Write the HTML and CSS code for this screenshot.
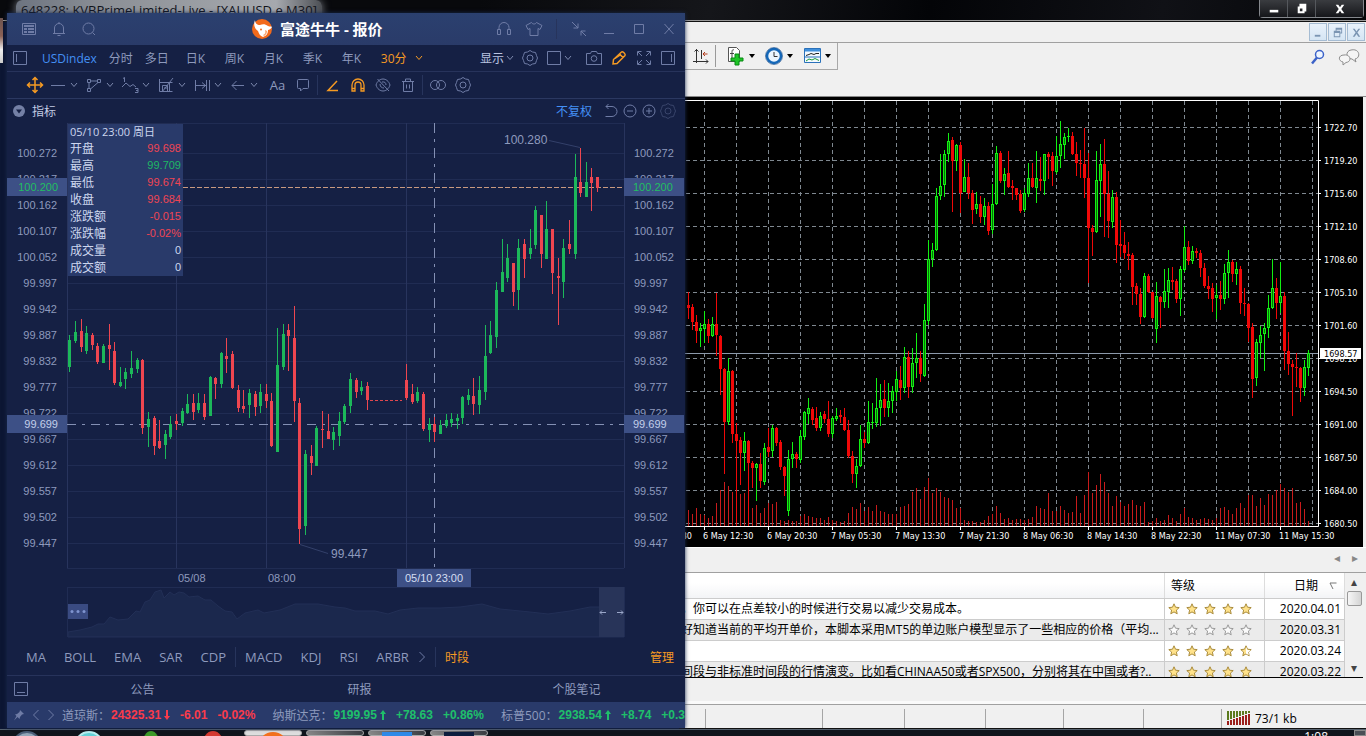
FILE: index.html
```html
<!DOCTYPE html>
<html lang="zh-CN">
<head>
    <meta charset="UTF-8">
    <meta name="viewport" content="width=device-width, initial-scale=1.0">
    <title>富途牛牛 - 报价</title>
    <link rel="stylesheet" href="styles.css">
</head>
<body>
    <!-- Shared icons -->
    <svg class="sprite" aria-hidden="true">
        <symbol id="i-chev" viewBox="0 0 8 6"><path d="M1 1l3 3.5L7 1"/></symbol>
        <symbol id="i-news" viewBox="0 0 18 18"><path d="M2.500 3.500h13v11h-13z"/><path d="M4 6h10M4 9h3M8 9h6M4 12h3M8 12h6" stroke-width="2"/></symbol>
        <symbol id="i-bell" viewBox="0 0 18 18"><path d="M3 13.500h12M4.500 13.500V8a4.500 4.500 0 0 1 9 0v5.500M7.500 15.500h3M9 3.500V2"/></symbol>
        <symbol id="i-search" viewBox="0 0 18 18"><circle cx="8.500" cy="8.500" r="5.500"/><path d="M12.500 12.500l2.500 2.500"/></symbol>
        <symbol id="i-head" viewBox="0 0 18 18"><path d="M4 9V7.500a5 5 0 0 1 10 0V9M2.500 9.500h3v5h-3zM12.500 9.500h3v5h-3z"/></symbol>
        <symbol id="i-shirt" viewBox="0 0 18 18"><path d="M6.500 2.500L1 5.500l2 4 2-1v7h8v-7l2 1 2-4-5.500-3c-1 2-4 2-5 0z"/></symbol>
        <symbol id="i-shrink" viewBox="0 0 18 18"><path d="M2 2l6 6M8 3.500V8H3.500M16 16l-5-5M11 15.500V11h4.500"/></symbol>
        <symbol id="i-min" viewBox="0 0 18 18"><path d="M4 13.500h10"/></symbol>
        <symbol id="i-max" viewBox="0 0 18 18"><path d="M4.500 4.500h9v9h-9z"/></symbol>
        <symbol id="i-close" viewBox="0 0 18 18"><path d="M4.500 4l9 10M13.500 4l-9 10"/></symbol>
        <symbol id="i-panel-l" viewBox="0 0 16 16"><path d="M1.500 1.500h13v13h-13zM4.500 4v8"/></symbol>
        <symbol id="i-panel-r" viewBox="0 0 16 16"><path d="M1.500 1.500h13v13h-13zM11.500 4v8"/></symbol>
        <symbol id="i-panel-b" viewBox="0 0 16 16"><path d="M1.500 1.500h13v13h-13zM4 11.500h8"/></symbol>
        <symbol id="i-square" viewBox="0 0 16 16"><path d="M1.500 1.500h13v13h-13z"/></symbol>
        <symbol id="i-hex" viewBox="0 0 18 18"><path d="M9 1.500l2.500 1.500 3 .5 1 3L16.500 9l-1 2.500-1 3-3 .5L9 16.500 6.500 15l-3-.5-1-3L1.500 9l1-2.500 1-3 3-.5z"/><circle cx="9" cy="9" r="3"/></symbol>
        <symbol id="i-camera" viewBox="0 0 18 18"><path d="M1.500 4.500h4l1-2h5l1 2h4v11h-15z"/><circle cx="9" cy="9.500" r="2.800"/></symbol>
        <symbol id="i-pencil" viewBox="0 0 18 18"><path d="M3 15l.5-4.500L11.500 3c1-1 4.500 2 3.500 3.500L7 14.500zM9.500 5l3.500 3.500M5 9.500L11 5.500" stroke-width="1.500"/></symbol>
        <symbol id="i-expand" viewBox="0 0 18 18"><path d="M2.500 6.500v-4h4M3 3l4 4M11.500 2.500h4v4M15 3l-4 4M2.500 11.500v4h4M3 15l4-4M11.500 15.500h4v-4M15 15l-4-4"/></symbol>
        <symbol id="i-move" viewBox="0 0 18 18"><path d="M9 2v14M2 9h14M6.500 4L9 1.500 11.500 4M6.500 14L9 16.500l2.500-2.500M4 6.500L1.500 9 4 11.500M14 6.500L16.500 9 14 11.500" stroke-width="1.500"/></symbol>
        <symbol id="i-line" viewBox="0 0 18 18"><path d="M2 9.500h14"/></symbol>
        <symbol id="i-poly" viewBox="0 0 18 18"><path d="M2.500 3.500h3v3h-3zM12.500 3.500h3v3h-3zM2.500 12.500h3v3h-3zM5.500 5h7M4 6.500v6M5.500 13L13 6.500"/></symbol>
        <symbol id="i-wave" viewBox="0 0 18 18"><path d="M2 2.500l1.500-1V6M1 11l4-4 4 3.500 3-2 3 2.500M14 12.500h3v4h-3M15 14.500h2"/></symbol>
        <symbol id="i-grid" viewBox="0 0 18 18"><path d="M2.500 3v12.500h13M2.500 6.500h13M5.500 15.500v-6h5v6M12.500 6v9M5 16L16 2M7 12h3"/></symbol>
        <symbol id="i-range" viewBox="0 0 18 18"><path d="M2.500 4v11M13.500 4v11M16.500 4v11M3 9.500h10M9 6.500l3.500 3L9 12.500"/></symbol>
        <symbol id="i-left" viewBox="0 0 18 18"><path d="M3 9.500h12M7.500 5L3 9.500 7.500 14"/></symbol>
        <symbol id="i-note" viewBox="0 0 18 18"><path d="M3.500 4.500q0-1 1-1h9q1 0 1 1v7q0 1-1 1H9l-2.500 2.500v-2.500h-2q-1 0-1-1z"/></symbol>
        <symbol id="i-angle" viewBox="0 0 18 18"><path d="M14 14.500H4L13 5" stroke-width="1.500"/></symbol>
        <symbol id="i-magnet" viewBox="0 0 18 18"><path d="M3 15V9a6 6 0 0 1 12 0v6h-3V9a3 3 0 0 0-6 0v6zM3 12.500h3M12 12.500h3" stroke-width="1.300"/></symbol>
        <symbol id="i-eye" viewBox="0 0 18 18"><path d="M2 9c2.500-8 11.500-8 14 0-2.500 8-11.500 8-14 0zM3.500 3l11.500 12M6 8c0 3 2 4 4 4M8 6c3-.5 4 1 4 3"/></symbol>
        <symbol id="i-trash" viewBox="0 0 18 18"><path d="M3 5.500h12M6.500 5V3h5v2M4.500 5.500v10h9v-10M7.500 8.500v4M10.500 8.500v4"/></symbol>
        <symbol id="i-venn" viewBox="0 0 18 18"><circle cx="6" cy="9" r="4.500"/><circle cx="12" cy="9" r="4.500"/></symbol>
        <symbol id="i-undo" viewBox="0 0 18 18"><path d="M3.500 14.500H10a4.500 4.500 0 0 0 0-10H4M6.500 2L4 4.500 6.500 7"/></symbol>
        <symbol id="i-minus" viewBox="0 0 18 18"><circle cx="9" cy="9" r="6"/><path d="M6 9h6"/></symbol>
        <symbol id="i-plus" viewBox="0 0 18 18"><circle cx="9" cy="9" r="6"/><path d="M6 9h6M9 6v6"/></symbol>
        <symbol id="i-next" viewBox="0 0 8 14"><path d="M1.500 2l5 5-5 5"/></symbol>
        <symbol id="i-prev" viewBox="0 0 8 14"><path d="M6.500 2l-5 5 5 5"/></symbol>
        <symbol id="i-star" viewBox="0 0 12 12"><path d="M6 .8l1.500 3.400 3.700.4-2.800 2.500.8 3.700L6 8.900l-3.200 1.900.8-3.700L.8 4.600l3.700-.4z"/></symbol>
    </svg>

    <!-- MetaTrader window -->
    <header class="mt-title">
        <span class="mt-title-text">648228: KVBPrimeLimited-Live - [XAUUSD.e,M30]</span>
        <div class="aero-buttons">
            <button type="button" aria-label="最小化"><svg viewBox="0 0 14 14"><path d="M2 8h10v3H2z"/></svg></button>
            <button type="button" aria-label="还原"><svg viewBox="0 0 14 14"><path d="M4 1h8v9h-2v2H2V4h2zM4.500 6.500v3h3v-3z" fill-rule="evenodd"/></svg></button>
            <button type="button" class="aero-close" aria-label="关闭"><svg viewBox="0 0 14 14"><path d="M2 2h3l2 3 2-3h3L8.500 7 12 12H9L7 9l-2 3H2l3.500-5z"/></svg></button>
        </div>
    </header>

    <main class="mt-body">
        <div class="mt-menu">
            <button type="button" aria-label="最小化图表"><svg viewBox="0 0 14 14"><path d="M3 9.500h6v2H3z"/></svg></button>
            <button type="button" aria-label="还原图表"><svg viewBox="0 0 14 14"><path d="M5 2h7v6h-2v4H3V5h2zM6 4v1h4v2h1V4zM4 7.500V11h5V7.500z" fill-rule="evenodd"/></svg></button>
            <button type="button" aria-label="关闭图表"><svg viewBox="0 0 14 14"><path d="M3 3h2l2 3 2-3h2L8 7l3 4.500H9L7 8.500l-2 3H3L6 7z"/></svg></button>
        </div>
        <div class="mt-toolbar">
            <div class="mt-tools">
                <button type="button" aria-label="图表平移"><svg width="18" height="18" viewBox="0 0 18 18" fill="none" stroke="#333"><path d="M4.500 2v14M1 14.500h15M9.500 3v9M2.500 4.500l2-2 2 2M14 12.500l2 2-2 2"/><path d="M15.500 7H11M13 5l-2 2 2 2" stroke="#b43a1a"/></svg></button>
                <span class="mt-sep"></span>
                <button type="button" class="mt-drop" aria-label="指标"><svg width="22" height="20" viewBox="0 0 22 20"><path d="M3.500 1.500h8l3 3v11h-11z" fill="#fff" stroke="#555"/><path d="M9 4c-2-1-2 1-2 3v5M5 7.500h4" fill="none" stroke="#444"/><path d="M10 8h4v4h4v3h-4v4h-4v-4H6v-3h4z" fill="#1fc427" stroke="#078a12"/></svg><i></i></button>
                <button type="button" class="mt-drop" aria-label="周期"><svg width="22" height="20" viewBox="0 0 22 20"><circle cx="11" cy="10" r="7" fill="#eaf5ff" stroke="#1467b8" stroke-width="2.500"/><circle cx="11" cy="10" r="8.500" fill="none" stroke="#0b4384" stroke-width=".6"/><path d="M11 6v4.500h3.500" fill="none" stroke="#333"/></svg><i></i></button>
                <button type="button" class="mt-drop" aria-label="模板"><svg width="22" height="20" viewBox="0 0 22 20"><path d="M3.500 2.500h16v14h-16z" fill="#f4faff" stroke="#2a71ba"/><path d="M4 3h15v2.500H4z" fill="#3f8fdb"/><path d="M4 11h15" stroke="#2a71ba"/><path d="M5 9.500l3-1 2-1 3 1 2-1h3" fill="none" stroke="#222"/><path d="M5 15l3-2 3 1 3-1.500 4 2" fill="none" stroke="#1c9b36"/></svg><i></i></button>
            </div>
            <div class="mt-right-tools">
                <button type="button" aria-label="搜索"><svg width="16" height="16" viewBox="0 0 16 16" fill="#eef5ff" stroke="#3c62c8"><circle cx="9.500" cy="5.500" r="4" stroke-width="1.500"/><path d="M7 8.500l-5 6" stroke-width="2.500"/></svg></button>
                <button type="button" aria-label="聊天"><svg width="22" height="18" viewBox="0 0 22 18" fill="#f5f5f5" stroke="#8d8d8d"><path d="M13 2c9-2 10 8 4 9l1 3-4-3C8 11 7 3 13 2z"/><path d="M6 7c7-1 8 7 2 7.500L5 17v-3C0 13 0 7 6 7z"/></svg></button>
            </div>
        </div>

        <svg class="mt-chart" id="mtChart" viewBox="679 97 687 450" role="img" aria-label="XAUUSD M30"></svg>

        <div class="mt-scroll"><span>◂</span><span>▸</span></div>

        <div class="mt-list">
            <table>
                <thead>
                    <tr><th></th><th class="col-rate">等级</th><th class="col-date">日期 <svg width="8" height="8" viewBox="0 0 8 8"><path d="M1 1h6.500M1 1l3 6" fill="none" stroke="#777"/></svg></th></tr>
                </thead>
                <tbody>
                    <tr><td>，你可以在点差较小的时候进行交易以减少交易成本。</td><td class="stars" data-stars="5"></td><td class="date">2020.04.01</td></tr>
                    <tr><td>好知道当前的平均开单价，本脚本采用MT5的单边账户模型显示了一些相应的价格（平均...</td><td class="stars" data-stars="0"></td><td class="date">2020.03.31</td></tr>
                    <tr><td></td><td class="stars" data-stars="4.5"></td><td class="date">2020.03.24</td></tr>
                    <tr><td>间段与非标准时间段的行情演变。比如看CHINAA50或者SPX500，分别将其在中国或者?..</td><td class="stars" data-stars="5"></td><td class="date">2020.03.22</td></tr>
                </tbody>
            </table>
            <div class="mt-scrollbar"><span>▴</span><b></b><span class="down">▾</span></div>
        </div>
        <div class="mt-gap"></div>
        <footer class="mt-status">
            <span></span><span></span><span></span><span></span><span></span><span></span><span></span>
            <div class="traffic"><svg id="traffic" width="24" height="14" viewBox="0 0 24 14"></svg>73/1 kb</div>
        </footer>
    </main>

    <footer class="taskbar">
        <span class="task"><i class="orb"></i></span>
        <span class="task"><i class="cyan"></i></span>
        <span class="task"><i class="green"></i></span>
        <span class="task"><i class="red"></i></span>
        <span class="task open active"><i class="orange"></i></span>
        <span class="task open"></span>
        <span class="task open"><i class="blue"></i></span>
        <span class="task open"><i class="navy"></i></span>
        <span class="clock">1:08</span>
        <span class="peek"></span>
    </footer>

    <div class="avatar"></div>

    <!-- Futu quote window -->
    <section class="futu">
        <header class="futu-title">
            <button type="button" aria-label="资讯"><svg class="icon"><use href="#i-news"/></svg></button>
            <button type="button" aria-label="提醒"><svg class="icon"><use href="#i-bell"/></svg></button>
            <button type="button" aria-label="搜索"><svg class="icon"><use href="#i-search"/></svg></button>
            <h1>
                <svg width="20" height="20" viewBox="0 0 20 20"><circle cx="10" cy="10" r="10" fill="#f26a1b"/><path d="M3 1c0 3 2 5 5 5 3-1 5-1 8 1 2 1 3 0 4 1-1 2-3 3-4 3 0 4-2 6-5 7-3-1-4-3-5-6C3 10 1 6 3 1z" fill="#fff"/><circle cx="9" cy="10.500" r="1" fill="#f26a1b"/><path d="M12 17c2-1 3-3 3-5l-2-1c1 3 0 4-2 5z" fill="#f9a36c"/></svg>
                富途牛牛 - 报价
            </h1>
            <div class="futu-controls">
                <button type="button" aria-label="客服"><svg class="icon"><use href="#i-head"/></svg></button>
                <button type="button" aria-label="皮肤"><svg class="icon"><use href="#i-shirt"/></svg></button>
                <span class="sep title-sep"></span>
                <button type="button" aria-label="精简"><svg class="icon"><use href="#i-shrink"/></svg></button>
                <button type="button" aria-label="最小化"><svg class="icon"><use href="#i-min"/></svg></button>
                <button type="button" aria-label="最大化"><svg class="icon"><use href="#i-max"/></svg></button>
                <button type="button" aria-label="关闭"><svg class="icon"><use href="#i-close"/></svg></button>
            </div>
        </header>

        <nav class="periods">
            <button type="button" aria-label="左侧栏"><svg class="icon small"><use href="#i-panel-l"/></svg></button>
            <div class="period-main">
                <button type="button" class="symbol">USDindex</button>
                <button type="button">分时</button>
                <button type="button">多日</button>
            </div>
            <div class="period-k">
                <button type="button">日K</button>
                <button type="button">周K</button>
                <button type="button">月K</button>
                <button type="button">季K</button>
                <button type="button">年K</button>
                <button type="button" class="on">30分<svg class="chev"><use href="#i-chev"/></svg></button>
            </div>
            <div class="view-tools">
                <button type="button" class="show">显示<svg class="chev"><use href="#i-chev"/></svg></button>
                <button type="button" aria-label="设置"><svg class="icon"><use href="#i-hex"/></svg></button>
                <button type="button" class="box" aria-label="窗格"><svg class="icon small"><use href="#i-square"/></svg><svg class="chev"><use href="#i-chev"/></svg></button>
                <button type="button" aria-label="截图"><svg class="icon"><use href="#i-camera"/></svg></button>
                <button type="button" class="on" aria-label="画线"><svg class="icon"><use href="#i-pencil"/></svg></button>
                <button type="button" aria-label="全屏"><svg class="icon"><use href="#i-expand"/></svg></button>
                <button type="button" aria-label="右侧栏"><svg class="icon small"><use href="#i-panel-r"/></svg></button>
            </div>
        </nav>

        <div class="draw-tools">
            <button type="button" class="on" aria-label="移动"><svg class="icon"><use href="#i-move"/></svg></button>
            <div class="drops">
                <button type="button" aria-label="直线"><svg class="icon"><use href="#i-line"/></svg><svg class="chev"><use href="#i-chev"/></svg></button>
                <button type="button" aria-label="形状"><svg class="icon"><use href="#i-poly"/></svg><svg class="chev"><use href="#i-chev"/></svg></button>
                <button type="button" aria-label="波浪"><svg class="icon"><use href="#i-wave"/></svg><svg class="chev"><use href="#i-chev"/></svg></button>
                <button type="button" aria-label="江恩"><svg class="icon"><use href="#i-grid"/></svg><svg class="chev"><use href="#i-chev"/></svg></button>
                <button type="button" aria-label="区间"><svg class="icon"><use href="#i-range"/></svg><svg class="chev"><use href="#i-chev"/></svg></button>
                <button type="button" aria-label="箭头"><svg class="icon"><use href="#i-left"/></svg><svg class="chev"><use href="#i-chev"/></svg></button>
            </div>
            <button type="button" class="text-tool">Aa</button>
            <button type="button" aria-label="注释"><svg class="icon"><use href="#i-note"/></svg></button>
            <span class="sep"></span>
            <button type="button" class="on" aria-label="角度"><svg class="icon"><use href="#i-angle"/></svg></button>
            <button type="button" class="on" aria-label="磁铁"><svg class="icon"><use href="#i-magnet"/></svg></button>
            <button type="button" aria-label="隐藏"><svg class="icon"><use href="#i-eye"/></svg></button>
            <button type="button" aria-label="删除"><svg class="icon"><use href="#i-trash"/></svg></button>
            <span class="sep"></span>
            <button type="button" aria-label="叠加"><svg class="icon"><use href="#i-venn"/></svg></button>
            <button type="button" aria-label="设置"><svg class="icon"><use href="#i-hex"/></svg></button>
        </div>

        <div class="chart-head">
            <button type="button" class="fold"><svg width="12" height="12" viewBox="0 0 12 12"><circle cx="6" cy="6" r="6" fill="#7480a6"/><path d="M3 4.500h6L6 8.500z" fill="#152044"/></svg>指标</button>
            <div class="chart-zoom">
                <a href="#">不复权</a>
                <button type="button" aria-label="撤销"><svg class="icon"><use href="#i-undo"/></svg></button>
                <button type="button" aria-label="缩小"><svg class="icon"><use href="#i-minus"/></svg></button>
                <button type="button" aria-label="放大"><svg class="icon"><use href="#i-plus"/></svg></button>
                <button type="button" class="dim" aria-label="设置"><svg class="icon"><use href="#i-hex"/></svg></button>
            </div>
        </div>

        <div class="chart-wrap">
            <svg class="futu-chart" id="futuChart" viewBox="7 122 678 516" role="img" aria-label="USDindex 30分"></svg>
            <table class="tip">
                <caption>05/10 23:00 周日</caption>
                <tr><th>开盘</th><td class="down">99.698</td></tr>
                <tr><th>最高</th><td class="up">99.709</td></tr>
                <tr><th>最低</th><td class="down">99.674</td></tr>
                <tr><th>收盘</th><td class="down">99.684</td></tr>
                <tr><th>涨跌额</th><td class="down">-0.015</td></tr>
                <tr><th>涨跌幅</th><td class="down">-0.02%</td></tr>
                <tr><th>成交量</th><td>0</td></tr>
                <tr><th>成交额</th><td>0</td></tr>
            </table>
        </div>

        <div class="indicators">
            <button type="button">MA</button>
            <button type="button">BOLL</button>
            <button type="button">EMA</button>
            <button type="button">SAR</button>
            <button type="button">CDP</button>
            <span class="sep"></span>
            <button type="button">MACD</button>
            <button type="button">KDJ</button>
            <button type="button">RSI</button>
            <button type="button">ARBR</button>
            <button type="button" class="more" aria-label="更多"><svg class="arrow"><use href="#i-next"/></svg></button>
            <span class="sep"></span>
            <button type="button" class="on">时段</button>
            <button type="button" class="on manage">管理</button>
        </div>

        <div class="info-tabs">
            <button type="button" class="tab-fold" aria-label="折叠"><svg class="icon small"><use href="#i-panel-b"/></svg></button>
            <button type="button">公告</button>
            <button type="button">研报</button>
            <button type="button">个股笔记</button>
        </div>

        <div class="ticker">
            <svg class="pin" width="12" height="12" viewBox="0 0 12 12"><path d="M7 1l4 4-2 .5L7 8l-.5 2L4.500 8 1 11.500 3.500 7 2 5.500 4 5l2.500-2z" fill="#6f7ca6"/></svg>
            <svg class="arrow"><use href="#i-prev"/></svg>
            <svg class="arrow"><use href="#i-next"/></svg>
            <div class="quote down"><span>道琼斯：</span><b>24325.31<svg width="6" height="10" viewBox="0 0 6 10"><path d="M2 0h2v6h2L3 10 0 6h2z"/></svg></b><b>-6.01</b><b>-0.02%</b></div>
            <div class="quote up"><span>纳斯达克：</span><b>9199.95<svg width="6" height="10" viewBox="0 0 6 10"><path d="M2 10h2V4h2L3 0 0 4h2z"/></svg></b><b>+78.63</b><b>+0.86%</b></div>
            <div class="quote up"><span>标普500：</span><b>2938.54<svg width="6" height="10" viewBox="0 0 6 10"><path d="M2 10h2V4h2L3 0 0 4h2z"/></svg></b><b>+8.74</b><b>+0.30%</b></div>
        </div>
    </section>

    <script src="charts.js"></script>
</body>
</html>
```
FILE: styles.css
```css
* {
    box-sizing: border-box;
}
body {
    margin: 0;
    height: 100vh;
    display: flex;
    flex-direction: column;
    overflow: hidden;
    position: relative;
    background: #0c1633;
    font-family: "Open Sans", "Noto Sans CJK SC", sans-serif;
    font-size: 12px;
}
button {
    background: none;
    border: none;
    padding: 0;
    margin: 0;
    font: inherit;
    color: inherit;
    display: flex;
    align-items: center;
    justify-content: center;
    flex: none;
    white-space: nowrap;
}
svg {
    flex: none;
}
.sprite {
    position: absolute;
    width: 0;
    height: 0;
}

/* MetaTrader window */
.mt-title {
    height: 22px;
    flex: none;
    display: flex;
    justify-content: space-between;
    background: linear-gradient(100deg, #08090c 35%, #15161a 52%, #030407 68%, #101116 85%, #050608);
    border-bottom: 1px solid #111;
    box-shadow: inset 0 -1px #999;
    overflow: hidden;
}
.mt-title-text {
    margin-left: 16px;
    padding: 0 5px;
    font-size: 13px;
    line-height: 20px;
    height: 20px;
    color: #10131a;
    background: linear-gradient(90deg, #6d7480, #8c9096 30%, #a6a9ae 85%, #4c4f54);
    border-radius: 6px;
    box-shadow: 0 0 8px #777b82;
}
.aero-buttons {
    display: flex;
    height: 18px;
    margin-right: 2px;
    border: 1px solid #85888d;
    border-top: none;
    border-radius: 0 0 4px 4px;
}
.aero-buttons button {
    width: 28px;
    border-right: 1px solid #55585d;
    background: linear-gradient(#3a3c40, #15161a);
}
.aero-buttons .aero-close {
    width: 47px;
    border-right: none;
}
.aero-buttons svg {
    width: 12px;
    height: 12px;
    fill: #fff;
}
.mt-body {
    flex: 1;
    min-height: 0;
    margin-left: calc(50% - 4px);
    display: flex;
    flex-direction: column;
    background: #f0f0f0;
}
.mt-menu {
    height: 21px;
    flex: none;
    display: flex;
    justify-content: flex-end;
    gap: 1px;
    padding: 1px 1px 1px 0;
    border-bottom: 1px solid #a0a0a0;
}
.mt-menu button {
    width: 18px;
    background: linear-gradient(#e9f2fb, #d5e5f4);
    border: 1px solid #a5bcd3;
}
.mt-menu svg {
    width: 13px;
    height: 13px;
    fill: #7b95b3;
}
.mt-toolbar {
    height: 54px;
    flex: none;
    display: flex;
    justify-content: space-between;
    align-items: flex-start;
    border-bottom: 1px solid #888;
}
.mt-tools {
    height: 27px;
    display: flex;
    align-items: center;
    padding: 0 2px 0 12px;
    border: 1px solid #a8a8a8;
    border-top: none;
}
.mt-sep {
    width: 1px;
    height: 22px;
    margin: 0 5px;
    background: #999;
}
.mt-drop {
    width: 38px;
    gap: 2px;
}
.mt-drop i {
    border: 3px solid transparent;
    border-top: 4px solid #000;
    border-bottom: none;
}
.mt-right-tools {
    display: flex;
    align-items: center;
    gap: 12px;
    height: 28px;
    padding-right: 6px;
}
.mt-chart {
    display: block;
    width: 100%;
    background: #000;
    font-family: "DejaVu Sans Condensed", "DejaVu Sans", sans-serif;
    font-size: 9px;
}
.mt-scroll {
    height: 26px;
    flex: none;
    display: flex;
    justify-content: flex-end;
    gap: 12px;
    padding-right: 8px;
    color: #888;
    line-height: 20px;
    border-top: 1px solid #fff;
    border-bottom: 1px solid #a0a0a0;
}
.mt-list {
    flex: 1;
    min-height: 0;
    display: flex;
    margin-right: 3px;
    overflow: hidden;
    background: #fff;
    border-bottom: 1px solid #000;
}
.mt-list table {
    flex: 1;
    border-collapse: collapse;
    table-layout: fixed;
    color: #000;
}
.mt-list th {
    height: 25px;
    padding: 0 6px;
    font-weight: normal;
    text-align: left;
    background: linear-gradient(#fff 40%, #f3f4f6);
    border-right: 1px solid #ddd;
    border-bottom: 1px solid #ccc;
}
.mt-list td {
    height: 21px;
    padding: 0 2px;
    line-height: 18px;
    white-space: nowrap;
    overflow: hidden;
    border-right: 1px solid #ccc;
    border-bottom: 1px solid #ccc;
}
.mt-list tbody tr:nth-child(even) {
    background: #ebebeb;
}
.mt-list .col-rate {
    width: 100px;
}
.mt-list .col-date {
    width: 80px;
    padding: 0 7px;
    text-align: right;
}
.col-date svg {
    margin-left: 8px;
}
.mt-list .stars {
    padding-left: 3px;
    font-size: 0;
}
.stars svg {
    width: 12px;
    height: 12px;
    margin-right: 6px;
    stroke: #a98b3c;
    fill: #ffe28a;
    vertical-align: middle;
}
.stars .empty {
    stroke: #999;
    fill: #fafafa;
}
.mt-list .date {
    padding-right: 3px;
    text-align: right;
}
.mt-scrollbar {
    width: 18px;
    display: flex;
    flex-direction: column;
    align-items: center;
    background: #f0f0f0;
    color: #444;
    line-height: 18px;
}
.mt-scrollbar b {
    width: 15px;
    height: 15px;
    background: linear-gradient(90deg, #f6f6f6, #d4d4d4);
    border: 1px solid #999;
    border-radius: 2px;
}
.mt-scrollbar .down {
    margin-top: auto;
}
.mt-gap {
    height: 27px;
    flex: none;
    border-bottom: 1px solid #a0a0a0;
    box-shadow: inset 0 -3px #fafafa;
}
.mt-status {
    height: 24px;
    flex: none;
    display: grid;
    grid-template-columns: 27fr 117fr 82fr 81fr 78fr 80fr 78fr 144fr;
    padding-top: 4px;
    border-bottom: 1px solid #111;
}
.mt-status span {
    height: 19px;
    border-right: 1px solid #a5a5a5;
}
.traffic {
    display: flex;
    align-items: center;
    gap: 4px;
    height: 18px;
    padding-left: 5px;
}

/* Taskbar */
.taskbar {
    height: 7px;
    flex: none;
    display: flex;
    overflow: hidden;
    background: #10151c;
    border-top: 1px solid #56626f;
}
.task {
    width: 62px;
    display: flex;
    justify-content: center;
}
.task:first-child {
    margin-left: -4px;
}
.task i {
    width: 30px;
    height: 30px;
    margin-top: 1px;
    border-radius: 50%;
}
.task.open {
    width: 58px;
    margin-right: 4px;
    border: 1px solid #aaa;
    border-radius: 3px;
    background: linear-gradient(90deg, #888, #3a3d42);
}
.task.active {
    background: #dedede;
}
.task .orb {
    background: #93a6b8;
    border: 2px solid #4b5f78;
}
.task .cyan {
    background: #62d1d6;
    border: 2px solid #b9eff0;
}
.task .green {
    width: 18px;
    background: #3c9a28;
}
.task .red {
    width: 22px;
    background: #d53a31;
}
.task .orange {
    background: #f2701d;
}
.task .blue {
    border-radius: 0;
    background: #2f8ae8;
}
.task .navy {
    border-radius: 0;
    background: #0d1e3e;
}
.clock {
    margin-left: auto;
    margin-right: 26px;
    line-height: 14px;
    color: #fff;
}
.peek {
    width: 12px;
    background: #4a4e55;
    border: 1px solid #888;
}
.avatar {
    position: absolute;
    left: 0;
    top: 18px;
    width: 3px;
    height: 45px;
    background: linear-gradient(#6d5450, #8b6256 40%, #eee 70%, #ccc);
}

/* Futu window */
.futu {
    position: absolute;
    left: 7px;
    top: 13px;
    bottom: 8px;
    width: calc(50% - 5px);
    display: flex;
    flex-direction: column;
    overflow: hidden;
    background: #152044;
    color: #8e9abd;
    box-shadow: 0 0 4px #1a2a50;
}
.icon {
    width: 18px;
    height: 18px;
    fill: none;
    stroke: #6f7ca6;
}
.icon.small {
    width: 16px;
    height: 16px;
}
.chev {
    width: 8px;
    height: 6px;
    fill: none;
    stroke: #7d89ae;
}
.arrow {
    width: 8px;
    height: 14px;
    fill: none;
    stroke: #6f7ca6;
}
.on {
    color: #f59a23;
}
.on .icon,
.on .chev {
    stroke: #f59a23;
}
.sep {
    width: 1px;
    height: 20px;
    background: #27345c;
}
.futu-title {
    height: 32px;
    flex: none;
    display: flex;
    align-items: center;
    padding: 0 1px 0 7px;
    background: linear-gradient(#2b406f, #2a3b69);
}
.futu-title button {
    width: 30px;
    height: 30px;
}
.futu-title h1 {
    display: flex;
    align-items: center;
    gap: 8px;
    margin: 0 0 0 148px;
    font-size: 15px;
    line-height: 20px;
    color: #fff;
}
.futu-controls {
    display: flex;
    align-items: center;
    margin-left: auto;
}
.title-sep {
    margin: 0 7px;
}
.periods {
    height: 27px;
    flex: none;
    display: flex;
    align-items: center;
    padding: 0 9px 0 5px;
    border-bottom: 1px solid #27335b;
}
.period-main {
    display: flex;
    align-items: center;
    gap: 12px;
    margin-left: 14px;
}
.symbol {
    color: #4490f5;
}
.period-k {
    display: grid;
    grid-auto-flow: column;
    grid-auto-columns: 39px;
    margin-left: 17px;
}
.period-k button {
    justify-content: flex-start;
}
.period-k .chev {
    margin-left: 8px;
}
.view-tools {
    display: flex;
    align-items: center;
    gap: 7px;
    margin-left: auto;
}
.view-tools .show {
    gap: 2px;
    color: #b9c4e2;
}
.view-tools .box {
    gap: 2px;
    margin-right: 6px;
}
.draw-tools {
    height: 27px;
    flex: none;
    display: flex;
    align-items: center;
    padding-left: 15px;
    border-bottom: 1px solid #2b3861;
}
.draw-tools > button {
    width: 25px;
}
.draw-tools .text-tool {
    font-size: 13px;
}
.draw-tools .sep {
    margin: 0 2px;
}
.drops {
    display: grid;
    grid-auto-flow: column;
    grid-auto-columns: 36px;
    margin-left: 2px;
}
.drops button {
    gap: 3px;
    justify-content: flex-start;
}
.chart-head {
    height: 23px;
    flex: none;
    display: flex;
    align-items: center;
    justify-content: space-between;
    padding: 0 8px 0 6px;
}
.fold {
    gap: 7px;
    color: #c3cce4;
}
.chart-zoom {
    display: flex;
    align-items: center;
    gap: 1px;
}
.chart-zoom a {
    margin-right: 9px;
    color: #4490f5;
    text-decoration: none;
}
.dim {
    opacity: 0.4;
}
.chart-wrap {
    flex: none;
    position: relative;
}
.futu-chart {
    display: block;
    width: 100%;
    font-family: "Liberation Sans", Arial, sans-serif;
    font-size: 11px;
}
.tip {
    position: absolute;
    left: 61px;
    top: 2px;
    width: 115px;
    border-collapse: collapse;
    background: #293a6a;
    color: #cdd7ef;
    font-size: 12px;
    line-height: 17px;
}
.tip caption {
    padding-left: 2px;
    text-align: left;
    line-height: 16px;
    background: #293a6a;
    font-size: 11px;
}
.tip th {
    padding: 0 2px;
    font-weight: normal;
    text-align: left;
}
.tip td {
    padding: 0 2px;
    text-align: right;
    font-family: "Liberation Sans", Arial, sans-serif;
    font-size: 11px;
}
.tip .up {
    color: #1db865;
}
.tip .down {
    color: #f04553;
}
.indicators {
    flex: 1;
    min-height: 0;
    display: flex;
    align-items: center;
    gap: 18px;
    padding: 0 11px 0 19px;
    border-bottom: 1px solid #27335b;
    font-size: 13px;
}
.indicators .sep {
    margin: 0 -9px;
}
.indicators .more {
    margin-left: -9px;
}
.indicators .on {
    font-size: 12px;
}
.indicators .manage {
    margin-left: auto;
}
.info-tabs {
    height: 26px;
    flex: none;
    display: flex;
}
.info-tabs button {
    flex: 1;
}
.info-tabs .tab-fold {
    flex: none;
    width: 27px;
}
.ticker {
    height: 26px;
    flex: none;
    display: flex;
    align-items: center;
    padding-left: 6px;
    background: #293a6a;
    white-space: nowrap;
}
.ticker .arrow {
    margin-left: 7px;
}
.quote {
    display: flex;
    align-items: center;
    gap: 10px;
    margin-left: 7px;
}
.quote ~ .quote {
    margin-left: 17px;
}
.quote b {
    display: flex;
    align-items: center;
    gap: 3px;
    font-family: "Liberation Sans", Arial, sans-serif;
}
.quote span {
    margin-right: -9px;
}
.quote.up b {
    color: #1fc06a;
    fill: #1fc06a;
}
.quote.down b {
    color: #fb3b4b;
    fill: #fb3b4b;
}
```
FILE: charts.js
```js
const NS = 'http://www.w3.org/2000/svg';

function add(parent, tag, attrs, text) {
    const el = document.createElementNS(NS, tag);
    for (const key in attrs) el.setAttribute(key, attrs[key]);
    if (text !== undefined) el.textContent = text;
    parent.appendChild(el);
    return el;
}

function line(svg, x1, y1, x2, y2, stroke, dash) {
    return add(svg, 'line', { x1, y1, x2, y2, stroke, 'stroke-dasharray': dash || 'none' });
}

// ---- USDindex: x, high, body top, body bottom, low, direction ----
const usd = `69 335 340 367 372 g|75 321 332 341 343 g|81 319 331 347 352 r|86 326 333 351 354 g|92 333 335 345 350 r
97 343 346 362 364 r|103 344 346 363 363 g|109 324 345 349 370 r|114 342 351 383 385 r|120 367 382 386 387 g
125 368 372 379 389 g|131 351 368 374 378 g|137 358 360 369 373 g|142 359 360 428 434 r|148 412 419 427 447 g
154 416 418 446 455 r|159 420 441 448 449 r|165 430 434 445 459 g|170 416 424 437 439 g|176 414 421 424 430 r
182 408 411 423 426 g|187 394 404 413 414 g|193 394 403 412 420 r|198 393 403 410 413 g|204 394 403 417 420 r
210 376 377 416 416 g|215 377 378 384 399 r|221 352 353 384 388 g|226 338 356 359 373 r|232 351 354 388 389 r
238 385 390 408 412 r|243 390 406 409 413 r|249 389 393 405 418 g|255 391 394 407 416 r|260 384 392 406 413 g
266 384 394 401 408 r|271 393 401 446 447 r|277 328 365 452 452 g|283 324 334 367 370 g|288 324 330 336 371 r
294 306 338 401 422 r|299 398 403 529 544 r|305 450 454 526 535 g|311 445 456 463 475 r|316 426 428 466 466 g
322 411 429 430 448 r|328 414 431 439 439 r|333 427 432 440 450 g|339 412 421 436 446 g|344 404 406 422 424 g
350 373 379 406 413 g|356 378 380 392 398 r|361 381 387 391 395 g|367 382 386 400 410 r|406 364 380 398 400 r
412 384 394 402 404 r|417 387 392 401 403 g|423 392 394 429 431 r|429 418 424 430 442 g|434 417 424 432 442 r
440 420 425 434 434 g|446 414 420 426 428 g|451 413 419 423 427 g|457 414 418 421 429 g|462 396 397 418 424 g
468 389 395 400 405 g|473 378 396 404 415 r|479 376 390 405 414 g|485 325 356 392 400 g|490 321 335 353 354 g
496 282 290 337 348 g|502 239 272 292 292 g|507 244 258 278 282 g|513 263 263 292 306 r|518 239 248 290 310 g
524 239 244 259 278 r|530 229 248 254 259 g|535 206 210 245 249 g|541 215 215 254 268 r|546 201 229 259 259 g
552 229 229 273 294 r|558 258 276 278 325 r|563 239 248 282 298 g|569 220 244 249 254 r|575 154 177 254 259 g
580 148 182 193 197 r|586 162 182 197 197 g|591 168 177 183 211 r|597 177 177 188 192 r`;

const futu = document.getElementById('futuChart');
const GRID = '#202c53';

const usdLabels = ['100.272', '100.217', '100.162', '100.107', '100.052', '99.997', '99.942', '99.887',
    '99.832', '99.777', '99.722', '99.667', '99.612', '99.557', '99.502', '99.447'];
line(futu, 67, 123.5, 624, 123.5, GRID);
usdLabels.forEach((label, i) => {
    const y = 153 + i * 26;
    line(futu, 67, y + 0.5, 624, y + 0.5, GRID);
    add(futu, 'text', { x: 57, y: y + 4, fill: '#8e9abd', 'text-anchor': 'end' }, label);
    add(futu, 'text', { x: 634, y: y + 4, fill: '#8e9abd' }, label);
});
[67.5, 176.5, 266.5, 406.5, 624.5].forEach(x => line(futu, x, 123, x, 568, '#28345d'));
line(futu, 67, 568.5, 624, 568.5, GRID);

// crosshair and last price lines
line(futu, 434.5, 123, 434.5, 568, '#8490b4', '10 6 3 6');
line(futu, 67, 424.5, 624, 424.5, '#8490b4', '9 6 3 6');
line(futu, 183, 187.5, 624, 187.5, '#c99a80', '5 2');
line(futu, 370, 400.5, 402, 400.5, '#e0474f', '3 2');

usd.split(/[|\n]/).forEach(row => {
    const [x, high, top, bottom, low, dir] = row.split(' ');
    const fill = dir === 'g' ? '#1cb85a' : '#ee4650';
    add(futu, 'rect', { x: x, y: high, width: 1, height: low - high, fill });
    add(futu, 'rect', { x: x - 1, y: top, width: 3, height: Math.max(1, bottom - top), fill });
});

line(futu, 549, 140.5, 580, 147.5, '#33406a');
line(futu, 300, 544.5, 328, 553.5, '#33406a');
add(futu, 'text', { x: 504, y: 144, fill: '#8e9abd', 'font-size': 12 }, '100.280');
add(futu, 'text', { x: 331, y: 558, fill: '#8e9abd', 'font-size': 12 }, '99.447');

// price flags on both axes
[[7, 58, 'end'], [624, 633, 'start']].forEach(([x, tx, anchor]) => {
    add(futu, 'rect', { x, y: 178, width: 60, height: 18, fill: '#3d5086' });
    add(futu, 'text', { x: tx, y: 191, fill: '#22bf62', 'text-anchor': anchor }, '100.200');
    add(futu, 'rect', { x, y: 415, width: 60, height: 18, fill: '#3d5086' });
    add(futu, 'text', { x: tx, y: 428, fill: '#c3cfea', 'text-anchor': anchor }, '99.699');
});

add(futu, 'text', { x: 178, y: 582, fill: '#8e9abd' }, '05/08');
add(futu, 'text', { x: 268, y: 582, fill: '#8e9abd' }, '08:00');
add(futu, 'rect', { x: 397, y: 569, width: 74, height: 18, fill: '#3d5086' });
add(futu, 'text', { x: 434, y: 582, fill: '#d5def2', 'text-anchor': 'middle' }, '05/10 23:00');

// overview strip
add(futu, 'path', {
    d: 'M68 637V632L80 630 92 627 98 624 104 624 110 617 118 620 128 619 136 611 140 612 145 602 150 600 155 592 161 590 164 598 170 592 174 595 179 592 184 593 189 597 198 596 205 600 211 600 218 606 225 611 232 612 237 619 245 613 258 610 264 613 280 610 295 604 318 604 335 607 345 608 355 611 375 611 388 614 400 610 418 608 440 608 460 607 482 604 500 609 530 612 548 614 570 611 590 607 624 607V637z',
    fill: '#1b284d', stroke: '#222f56'
});
add(futu, 'rect', { x: 67.5, y: 587.5, width: 557, height: 49, fill: 'none', stroke: GRID });
add(futu, 'rect', { x: 599, y: 587, width: 25, height: 50, fill: '#283459' });
add(futu, 'path', { d: 'M606 612.5h-6m2-2l-2 2 2 2M617 612.5h6m-2-2l2 2-2 2', fill: 'none', stroke: '#9aa6c8' });
add(futu, 'rect', { x: 68, y: 604, width: 20, height: 15, fill: '#3a4b82' });
[72, 78, 84].forEach(cx => add(futu, 'circle', { cx, cy: 611.5, r: 1.5, fill: '#7f94cf' }));

// ---- XAUUSD: high, body top, body bottom, low, direction; three steps to a pixel ----
const gold = `590 630 640 672 r|628 636 682 705 r|660 680 708 745 r|685 700 708 755 g|648 688 702 745 g|672 688 722 745 r
667 688 722 725 g|593 688 720 782 r|720 722 823 900 r|820 822 980 1138 r|790 828 980 990 g|825 828 1018 1045 r
985 1018 1037 1292 r|1025 1035 1075 1170 r|1010 1037 1075 1128 g|1035 1037 1103 1292 r|1098 1103 1118 1178 r|1105 1108 1118 1218 g
1075 1108 1158 1178 r|1045 1060 1160 1170 g|1000 1057 1070 1085 r|990 1000 1068 1085 g|995 998 1045 1052 r|1035 1040 1115 1125 r
1112 1115 1142 1202 r|1065 1093 1247 1262 g|1042 1078 1093 1118 g|1070 1077 1093 1118 r|1005 1023 1095 1103 g|948 952 1025 1035 g
908 940 957 987 g|935 942 975 990 r|935 970 1000 1008 r|950 962 1000 1008 g|948 958 972 985 r|918 972 1017 1025 r
962 970 1017 1028 g|940 962 971 978 g|945 960 966 985 r|940 965 1005 1008 r|975 1005 1082 1090 r|1068 1082 1136 1165 r
1093 1112 1136 1178 g|990 1033 1112 1115 g|1010 1032 1043 1060 r|918 982 1043 1046 g|925 980 984 1003 g|850 940 984 995 g
868 915 940 992 g|855 913 938 965 r|865 917 938 965 g|872 888 917 955 g|828 853 890 918 g|812 855 880 915 r
755 787 878 893 g|768 787 875 908 r|760 805 877 895 g|715 790 805 850 g|768 790 838 860 r|628 675 842 845 g
435 493 677 690 g|443 466 493 515 g|280 304 466 468 g|178 273 304 315 g|165 178 271 307 g|115 138 178 200 g
127 135 197 350 r|148 151 197 228 g|142 151 293 355 r|192 246 291 292 g|205 246 295 313 r|285 293 345 388 r
292 328 342 358 g|302 328 367 385 r|308 333 367 390 g|320 332 407 420 r|267 328 405 418 g|153 175 328 330 g
168 174 257 265 r|220 238 257 300 g|168 235 275 280 r|255 274 280 315 r|278 280 300 315 r|285 298 347 355 r
280 295 345 350 g|203 250 297 305 g|203 250 275 280 r|168 250 280 323 g|187 252 257 287 r|178 178 257 300 g
172 177 185 252 r|172 183 227 272 r|123 182 230 237 g|78 148 182 218 g|113 127 150 192 g|98 122 127 140 g
110 122 178 180 r|140 178 203 243 r|165 203 208 250 r|100 208 250 310 r|175 250 400 565 r|390 398 410 483 r
168 255 412 415 g|147 208 257 365 g|132 208 298 425 r|228 298 378 430 r|285 307 380 398 g|290 307 450 505 r
375 448 452 485 r|412 450 475 492 r|440 478 482 525 r|473 480 575 630 r|565 572 597 630 r|580 597 665 688 r
535 543 665 668 g|538 543 592 595 r|590 592 668 672 r|560 603 703 743 g|603 605 620 698 r|523 588 620 638 g
520 555 590 640 g|517 556 560 585 r|552 558 612 625 r|513 522 613 662 g|393 457 524 530 g|438 457 497 510 r
452 468 497 508 g|458 467 475 490 r|466 475 520 545 r|505 520 573 580 r|543 572 582 612 r|563 580 613 650 r
570 600 608 672 g|557 600 613 645 r|508 535 612 627 g|465 502 535 608 g|495 500 537 560 r|502 522 537 570 g
512 522 625 657 r|580 625 627 662 r|625 627 700 740 r|685 697 853 908 r|733 742 850 872 g|693 720 745 788 g
685 700 718 828 g|600 640 700 730 g|493 580 640 643 g|550 580 625 673 r|502 602 625 655 g|590 602 768 825 r
712 768 808 840 r|795 808 815 963 r|775 815 820 875 r|815 818 878 920 r|795 815 878 903 g|765 773 818 842 g`;

const volume = [1245, 1256, 1240, 1256, 1260, 1268, 1263, 1223, 1185, 1160, 1172, 1190, 1180, 1197, 1195, 1190, 1238, 1230, 1255, 1240,
    1223, 1228, 1222, 1275, 1278, 1276, 1278, 1277, 1262, 1258, 1262, 1266, 1268, 1270, 1276, 1265, 1275, 1278, 1280, 1278,
    1255, 1237, 1242, 1225, 1248, 1237, 1248, 1230, 1248, 1252, 1256, 1258, 1256, 1235, 1232, 1227, 1190, 1178, 1212, 1175,
    1150, 1195, 1178, 1190, 1205, 1210, 1215, 1240, 1240, 1275, 1278, 1278, 1280, 1280, 1276, 1262, 1256, 1233, 1255, 1272,
    1268, 1275, 1272, 1272, 1275, 1272, 1265, 1234, 1240, 1242, 1195, 1248, 1248, 1232, 1245, 1255, 1252, 1202, 1255, 1200,
    1132, 1193, 1170, 1138, 1160, 1195, 1232, 1203, 1220, 1233, 1228, 1214, 1230, 1232, 1220, 1280, 1278, 1270, 1278, 1276,
    1260, 1270, 1278, 1258, 1240, 1266, 1270, 1275, 1272, 1270, 1272, 1275, 1268, 1238, 1236, 1246, 1257, 1240, 1225, 1240,
    1200, 1200, 1232, 1210, 1230, 1197, 1200, 1185, 1167, 1178, 1190, 1180, 1225, 1220, 1242, 1278];

const mt = document.getElementById('mtChart');
const toY = v => Math.round(95 + v / 3);

for (let x = 704; x < 1318; x += 32) line(mt, x + 0.5, 101, x + 0.5, 526, '#7f8890', '4 3');
const goldLabels = ['1722.70', '1719.20', '1715.60', '1712.10', '1708.60', '1705.10', '1701.60', '1698.10',
    '1694.50', '1691.00', '1687.50', '1684.00', '1680.50'];
goldLabels.forEach((label, i) => {
    const y = 127 + i * 33;
    line(mt, 679, y + 0.5, 1318, y + 0.5, '#7f8890', '4 3');
    line(mt, 1318, y + 0.5, 1321, y + 0.5, '#fff');
    add(mt, 'text', { x: 1324, y: y + 4, fill: '#fff' }, label);
});

volume.forEach((v, i) => {
    add(mt, 'rect', { x: 688 + i * 4, y: toY(v), width: 1, height: 526 - toY(v), fill: '#c81b1b' });
});
line(mt, 679, 353.5, 1318, 353.5, '#8c99aa');

gold.split(/[|\n]/).forEach((row, i) => {
    const [high, top, bottom, low, dir] = row.split(' ');
    const x = 688 + i * 4;
    const bodyTop = toY(+top);
    const bodyHeight = Math.max(1, toY(+bottom) - bodyTop);
    const fill = dir === 'g' ? '#12f012' : '#f00808';
    add(mt, 'rect', { x, y: toY(+high), width: 1, height: toY(+low) - toY(+high), fill });
    add(mt, 'rect', { x: x - 1, y: bodyTop, width: 3, height: bodyHeight, fill });
    if (dir === 'g' && bodyHeight > 2) {
        add(mt, 'rect', { x, y: bodyTop + 1, width: 1, height: bodyHeight - 2, fill: '#067006' });
    }
});

add(mt, 'path', { d: 'M679 100.5H1318.5V526.5H679', fill: 'none', stroke: '#fff' });
add(mt, 'rect', { x: 1363, y: 97, width: 3, height: 450, fill: '#f0f0f0' });
add(mt, 'rect', { x: 1320, y: 348, width: 41, height: 11, fill: '#fff' });
add(mt, 'text', { x: 1324, y: 357, fill: '#000' }, '1698.57');

['6 May 12:30', '6 May 20:30', '7 May 05:30', '7 May 13:30', '7 May 21:30', '8 May 06:30', '8 May 14:30',
    '8 May 22:30', '11 May 07:30', '11 May 15:30'].forEach((label, i) => {
    const x = 704 + i * 64;
    line(mt, x + 0.5, 526, x + 0.5, 530, '#fff');
    add(mt, 'text', { x: x - 1, y: 539, fill: '#fff' }, label);
});
add(mt, 'text', { x: 692, y: 539, fill: '#fff', 'text-anchor': 'end' }, '30');

// ---- rating stars ----
document.querySelectorAll('[data-stars]').forEach(cell => {
    const count = +cell.dataset.stars;
    for (let i = 0; i < 5; i++) {
        const star = add(cell, 'svg', { viewBox: '0 0 12 12' });
        add(star, 'use', { href: '#i-star' });
        if (count === 0) star.setAttribute('class', 'empty');
        if (count > i && count < i + 1) {
            add(star, 'path', { d: 'M6 2l1.500 3 3 .3-2.300 2 .6 2.700L6 8.500z', fill: '#fff', stroke: 'none' });
        }
    }
});

// ---- connection bars ----
const traffic = document.getElementById('traffic');
for (let i = 0; i < 8; i++) {
    add(traffic, 'rect', { x: i * 3, y: 0, width: 2, height: 9 - i, fill: '#5b7a1e' });
    add(traffic, 'rect', { x: i * 3, y: 10 - i, width: 2, height: 4 + i, fill: '#9c1f1b' });
}
```
